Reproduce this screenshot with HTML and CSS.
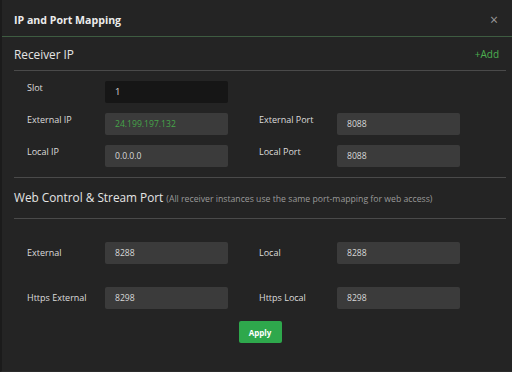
FILE: index.html
```html
<!DOCTYPE html>
<html>
<head>
<meta charset="utf-8">
<link rel="stylesheet" href="styles.css">
</head>
<body>
<div class="modal">
  <div class="header">
    <span class="title">IP and Port Mapping</span>
    <span class="close">×</span>
  </div>
  <div class="body">
    <div class="section-head first">
      <span class="section-title">Receiver IP</span>
      <span class="add">+Add</span>
    </div>
    <div class="rows top">
      <div class="row">
        <div class="field"><span class="label">Slot</span><div class="input dark">1</div></div>
      </div>
      <div class="row">
        <div class="field"><span class="label">External IP</span><div class="input green">24.199.197.132</div></div>
        <div class="field"><span class="label">External Port</span><div class="input">8088</div></div>
      </div>
      <div class="row">
        <div class="field"><span class="label">Local IP</span><div class="input">0.0.0.0</div></div>
        <div class="field"><span class="label">Local Port</span><div class="input">8088</div></div>
      </div>
    </div>
    <div class="section-head second">
      <span class="section-title">Web Control &amp; Stream Port <small class="note">(All receiver instances use the same port-mapping for web access)</small></span>
    </div>
    <div class="rows bottom">
      <div class="row">
        <div class="field"><span class="label">External</span><div class="input">8288</div></div>
        <div class="field"><span class="label">Local</span><div class="input">8288</div></div>
      </div>
      <div class="row">
        <div class="field"><span class="label">Https External</span><div class="input">8298</div></div>
        <div class="field"><span class="label">Https Local</span><div class="input">8298</div></div>
      </div>
    </div>
    <div class="actions"><button class="apply">Apply</button></div>
  </div>
</div>
</body>
</html>
```

FILE: styles.css
```css
html, body {
  margin: 0;
  padding: 0;
  background: #242424;
}
body {
  font-family: "Open Sans", "Noto Sans", sans-serif;
  color: #e2e2e2;
}
.modal {
  width: 512px;
  height: 372px;
  box-sizing: border-box;
  background: #242424;
  border-left: 2px solid #1b1b1b;
  border-bottom: 1px solid #2c2c2c;
}
.header {
  height: 37px;
  box-sizing: border-box;
  display: flex;
  align-items: center;
  justify-content: space-between;
  padding: 3px 14px 0 12px;
  border-bottom: 1px solid #3e5c41;
}
.title {
  font-size: 10.6px;
  font-weight: 700;
  color: #ececec;
}
.close {
  font-size: 14px;
  color: #9a9a9a;
}
.body {
  padding: 0 6px 0 12px;
}
.section-head {
  display: flex;
  align-items: center;
  justify-content: space-between;
  border-bottom: 1px solid #4a4a4a;
  box-sizing: border-box;
}
.section-head.first {
  height: 34px;
}
.section-head.second {
  border-top: 1px solid #4a4a4a;
  height: 42px;
  padding-bottom: 2px;
}
.section-title {
  font-size: 11.8px;
  color: #e4e4e4;
}
.note {
  font-size: 8.7px;
  color: #9a9a9a;
}
.add {
  font-size: 10px;
  color: #4caf50;
  margin-right: 7px;
}
.rows {
  display: flex;
  flex-direction: column;
  padding-left: 13px;
}
.rows.top {
  gap: 10px;
  padding-top: 10px;
  padding-bottom: 10px;
}
.rows.bottom {
  gap: 23px;
  padding-top: 23px;
}
.row {
  display: flex;
  gap: 31px;
}
.field {
  display: flex;
}
.rows.top .field {
  align-items: flex-start;
}
.rows.bottom .field {
  align-items: center;
}
.label {
  width: 78px;
  font-size: 9px;
  line-height: 14px;
  color: #dcdcdc;
}
.input {
  width: 123px;
  height: 22px;
  box-sizing: border-box;
  background: #3b3b3b;
  border-radius: 2px;
  padding: 0 10px;
  font-size: 8.6px;
  line-height: 22px;
  color: #d8d8d8;
}
.input.dark {
  background: #161616;
  font-size: 9.5px;
}
.input.green {
  color: #46a549;
}
.actions {
  display: flex;
  justify-content: center;
  padding-top: 12px;
}
.apply {
  width: 43px;
  height: 22px;
  border: none;
  border-radius: 2px;
  background: #2ea84c;
  color: #ffffff;
  font-family: "Open Sans", sans-serif;
  font-size: 8px;
  font-weight: 700;
  padding: 0;
}
```
